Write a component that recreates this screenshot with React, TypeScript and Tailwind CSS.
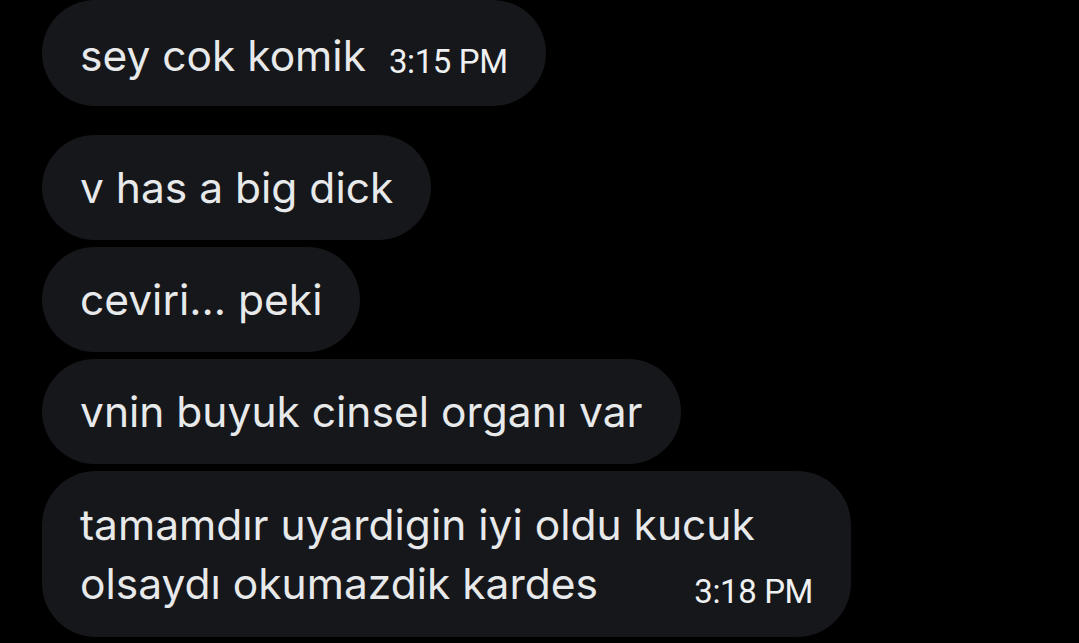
type Msg = {
  text: string;
  time?: string;
};

const Time = ({ value }: { value: string }) => (
  <span className="block font-['Roboto','Liberation_Sans',sans-serif] text-[33px] tracking-[-0.4px] text-[#eef0f1] leading-[33px] whitespace-nowrap">
    {value}
  </span>
);

const Bubble = ({ text, time }: Msg) => (
  <div className="flex items-end rounded-full bg-[#16171a] px-[38px] py-[24px]">
    <p className="text-[42.5px] leading-[57px] whitespace-nowrap">{text}</p>
    {time && (
      <div className="ml-[23px] pb-[6px]">
        <Time value={time} />
      </div>
    )}
  </div>
);

export default function App() {
  return (
    <div className="h-[643px] w-[1079px] overflow-hidden bg-black pl-[42px] font-['Inter','Noto_Sans',sans-serif] text-[#e7e9ea]">
      <div className="flex flex-col items-start">
        <div className="flex items-end rounded-full bg-[#16171a] pl-[38px] pr-[38px] pt-[27px] pb-[22px]">
          <p className="text-[42.5px] leading-[57px] whitespace-nowrap">sey cok komik</p>
          <div className="ml-[23px] pb-[6px]">
            <Time value="3:15 PM" />
          </div>
        </div>

        <div className="mt-[29px] flex flex-col items-start gap-[7px]">
          <Bubble text="v has a big dick" />
          <Bubble text="ceviri... peki" />
          <Bubble text="vnin buyuk cinsel organı var" />

          <div className="w-[809px] rounded-[54px] bg-[#16171a] px-[38px] py-[24px] text-[42.5px] leading-[59px]">
            <p className="whitespace-nowrap">tamamdır uyardigin iyi oldu kucuk</p>
            <div className="flex items-end justify-between">
              <p className="whitespace-nowrap">olsaydı okumazdik kardes</p>
              <div className="pb-[5px]">
                <Time value="3:18 PM" />
              </div>
            </div>
          </div>
        </div>
      </div>
    </div>
  );
}
